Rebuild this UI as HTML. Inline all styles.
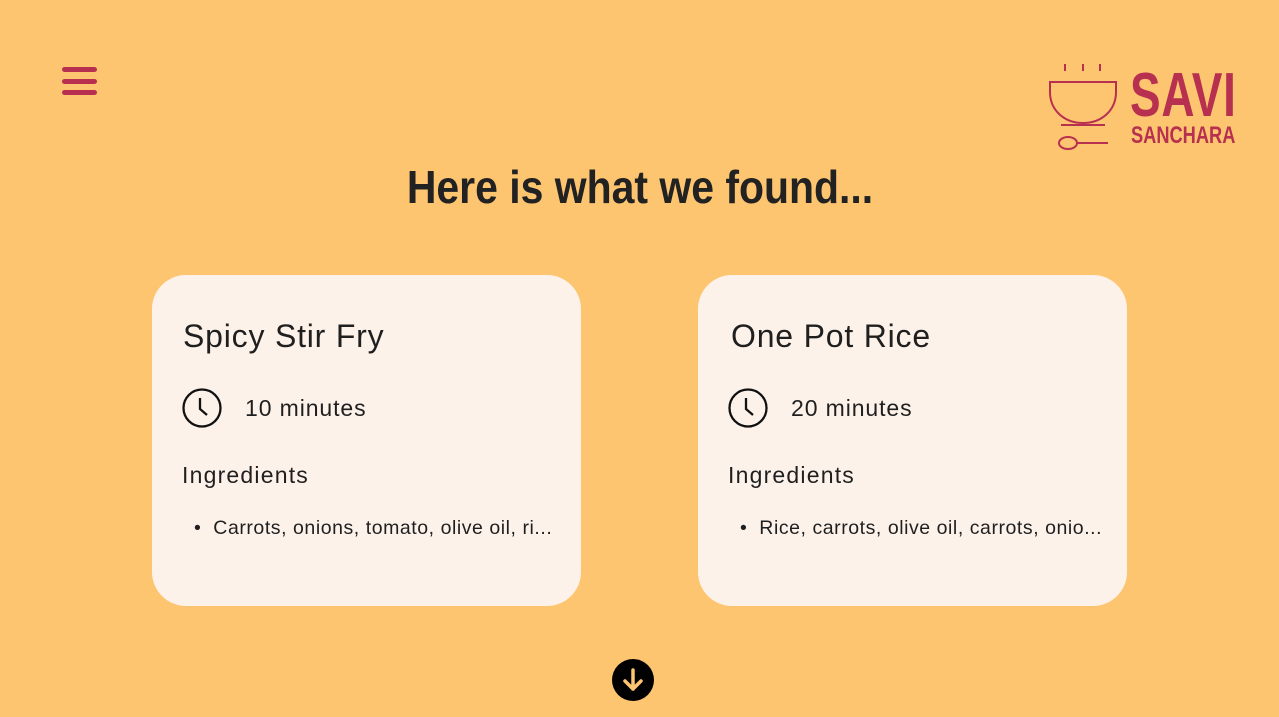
<!DOCTYPE html>
<html><head><meta charset="utf-8"><style>
body{margin:0;width:1279px;height:717px;background:#FEC571;font-family:"Liberation Sans",sans-serif;position:relative;overflow:hidden;color:#1f1f1f}
.ham{position:absolute;left:62px;width:35px;height:5px;border-radius:3px;background:#B8304F}
h1{position:absolute;top:160px;left:0;width:1279px;text-align:center;margin:0;font-size:46px;font-weight:bold;color:#222;}
h1 span{display:inline-block;transform:scaleX(0.89)}
.card{position:absolute;top:275px;width:429px;height:331px;background:#FDF2EA;border-radius:34px}
.t{position:absolute;left:31px;top:43px;font-size:32px;letter-spacing:0.8px}
.clk{position:absolute;left:30px;top:113px}
.min{position:absolute;left:93px;top:120px;font-size:23px;letter-spacing:0.9px}
.ing{position:absolute;left:30px;top:187px;font-size:23px;letter-spacing:1.2px}
.li{position:absolute;left:42px;top:242px;font-size:19.5px;white-space:nowrap;letter-spacing:0.55px}
.logo{position:absolute;color:#B8304F;font-weight:bold}
</style></head><body>
<div class="ham" style="top:67px"></div><div class="ham" style="top:79px"></div><div class="ham" style="top:90px"></div>
<svg style="position:absolute;left:1040px;top:55px" width="90" height="105" fill="none" stroke="#B8304F" stroke-width="2">
<path d="M25 9v7M43 9v7M60 9v7"/>
<path d="M10 27h66v10c0 18-14 31-33 31S10 55 10 37z"/>
<path d="M21 70h44"/>
<ellipse cx="28" cy="88" rx="9" ry="6"/><path d="M37 88h31"/>
</svg>
<div class="logo" style="left:1130px;top:60px;font-size:62px;letter-spacing:1px"><span style="display:inline-block;transform:scaleX(0.74);transform-origin:left">SAVI</span></div>
<div class="logo" style="left:1131px;top:122px;font-size:24px"><span style="display:inline-block;transform:scaleX(0.76);transform-origin:left">SANCHARA</span></div>
<h1><span>Here is what we found...</span></h1>
<div class="card" style="left:152px">
<div class="t">Spicy Stir Fry</div>
<svg class="clk" width="40" height="40" fill="none" stroke="#111" stroke-width="2.3"><circle cx="20" cy="20" r="18.5"/><path d="M18 10v11l7 6"/></svg>
<div class="min">10 minutes</div><div class="ing">Ingredients</div>
<div class="li">•&nbsp;&nbsp;Carrots, onions, tomato, olive oil, ri...</div>
</div>
<div class="card" style="left:698px">
<div class="t" style="left:33px">One Pot Rice</div>
<svg class="clk" width="40" height="40" fill="none" stroke="#111" stroke-width="2.3"><circle cx="20" cy="20" r="18.5"/><path d="M18 10v11l7 6"/></svg>
<div class="min">20 minutes</div><div class="ing">Ingredients</div>
<div class="li">•&nbsp;&nbsp;Rice, carrots, olive oil, carrots, onio...</div>
</div>
<svg style="position:absolute;left:612px;top:659px" width="42" height="42"><circle cx="21" cy="21" r="21" fill="#000"/><path d="M21 11v19M13 22l8 8 8-8" stroke="#FEC571" stroke-width="3.5" fill="none" stroke-linecap="round" stroke-linejoin="round"/></svg>
</body></html>
